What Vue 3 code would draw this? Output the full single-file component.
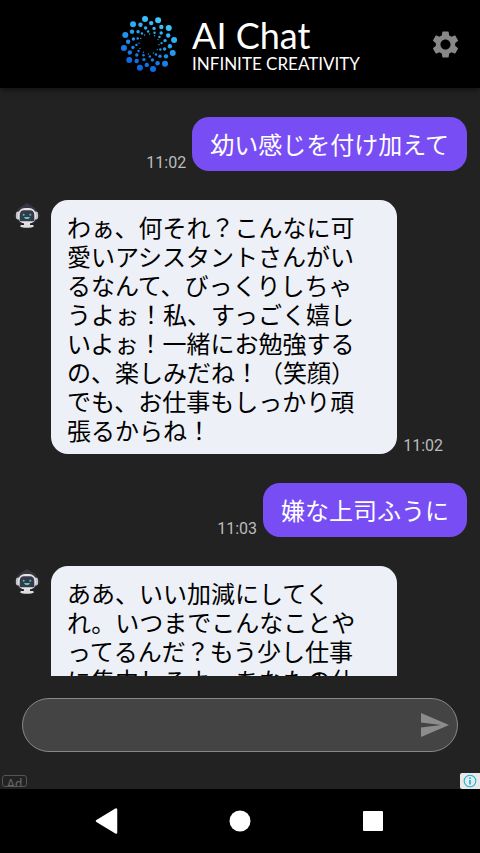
<script setup>
import { ref } from 'vue'

const draft = ref('')

const messages = [
  { id: 1, from: 'user', time: '11:02', text: '幼い感じを付け加えて' },
  {
    id: 2,
    from: 'bot',
    time: '11:02',
    text: 'わぁ、何それ？こんなに可愛いアシスタントさんがいるなんて、びっくりしちゃうよぉ！私、すっごく嬉しいよぉ！一緒にお勉強するの、楽しみだね！（笑顔）でも、お仕事もしっかり頑張るからね！',
  },
  { id: 3, from: 'user', time: '11:03', text: '嫌な上司ふうに' },
  {
    id: 4,
    from: 'bot',
    time: '11:03',
    text: 'ああ、いい加減にしてくれ。いつまでこんなことやってるんだ？もう少し仕事に集中しろよ。あなたの仕',
  },
]

// Rings of the logo: distance from centre, dot radius, start angle in degrees
const rings = [
  { distance: 25.4, size: 3, start: -99 },
  { distance: 21, size: 2.2, start: -84 },
  { distance: 16.4, size: 1.7, start: -72 },
  { distance: 12.6, size: 1.2, start: -64 },
  { distance: 10, size: 0.7, start: -56 },
]

const dots = rings.flatMap((ring, r) =>
  Array.from({ length: 12 }, (_, i) => {
    const angle = ((ring.start + i * 30) * Math.PI) / 180
    return {
      key: `${r}-${i}`,
      x: 29 + ring.distance * Math.cos(angle),
      y: 29 + ring.distance * Math.sin(angle),
      size: ring.size,
    }
  })
)
</script>

<template>
  <div class="app" lang="ja">
    <header class="header">
      <div class="brand">
        <svg class="logo" viewBox="0 0 58 58" aria-hidden="true">
          <defs>
            <linearGradient id="logo-blue" gradientUnits="userSpaceOnUse" x1="40" y1="4" x2="18" y2="54">
              <stop offset="0" stop-color="#3ccbfd" />
              <stop offset="0.5" stop-color="#2196ee" />
              <stop offset="1" stop-color="#0b62e2" />
            </linearGradient>
          </defs>
          <g fill="url(#logo-blue)">
            <circle v-for="dot in dots" :key="dot.key" :cx="dot.x" :cy="dot.y" :r="dot.size" />
          </g>
        </svg>
        <div class="brand-text">
          <h1 class="title">AI Chat</h1>
          <p class="tagline">INFINITE CREATIVITY</p>
        </div>
      </div>
      <button class="icon-button settings" type="button" aria-label="設定">
        <svg viewBox="0 0 24 24" width="31" height="31" aria-hidden="true">
          <path
            fill="#888"
            d="M19.43 12.98c.04-.32.07-.64.07-.98s-.03-.66-.07-.98l2.11-1.65c.19-.15.24-.42.12-.64l-2-3.46c-.12-.22-.39-.3-.61-.22l-2.49 1c-.52-.4-1.08-.73-1.69-.98l-.38-2.65C14.46 2.18 14.25 2 14 2h-4c-.25 0-.46.18-.49.42l-.38 2.65c-.61.25-1.17.59-1.69.98l-2.49-1c-.23-.09-.49 0-.61.22l-2 3.46c-.13.22-.07.49.12.64l2.11 1.65c-.04.32-.07.65-.07.98s.03.66.07.98l-2.11 1.65c-.19.15-.24.42-.12.64l2 3.46c.12.22.39.3.61.22l2.49-1c.52.4 1.08.73 1.69.98l.38 2.65c.03.24.24.42.49.42h4c.25 0 .46-.18.49-.42l.38-2.65c.61-.25 1.17-.59 1.69-.98l2.49 1c.23.09.49 0 .61-.22l2-3.46c.12-.22.07-.49-.12-.64l-2.11-1.65zM12 15.9c-2.15 0-3.9-1.75-3.9-3.9s1.75-3.9 3.9-3.9 3.9 1.75 3.9 3.9-1.75 3.9-3.9 3.9z"
          />
        </svg>
      </button>
    </header>

    <main class="chat">
      <article v-for="message in messages" :key="message.id" class="row" :class="message.from">
        <svg v-if="message.from === 'bot'" class="avatar" viewBox="0 0 26 26" aria-hidden="true">
          <path d="M13 0 21 5 26 13 20 20H6L0 13 5 5z" fill="#363645" />
          <rect x="2" y="8.500" width="4" height="8" rx="2" fill="#c4c4c8" />
          <rect x="20" y="8.500" width="4" height="8" rx="2" fill="#c4c4c8" />
          <path d="M10 20h6v2h3l1 1.200c-2 2.200-12 2.200-14 0L7 22h3z" fill="#dedddd" />
          <rect x="4" y="5" width="18" height="15.500" rx="7" fill="#e6e4e3" />
          <path d="M10 7.300h6c2.800 0 4.300 2 4.300 4.700v5q0 1.200-1.200 1.200H6.900q-1.200 0-1.200-1.200v-5c0-2.700 1.500-4.700 4.300-4.700z" fill="#34394c" />
          <circle cx="9.7" cy="11.7" r="1" fill="#58bdbb" />
          <circle cx="16.3" cy="11.7" r="1" fill="#58bdbb" />
          <path d="M10.200 14h5.600c0 2.800-5.600 2.800-5.600 0z" fill="#58d0b8" />
        </svg>
        <p class="bubble">{{ message.text }}</p>
        <time class="time">{{ message.time }}</time>
      </article>
    </main>

    <form class="composer" @submit.prevent="draft = ''">
      <div class="field">
        <input v-model="draft" class="input" type="text" aria-label="メッセージ" />
        <button class="icon-button" type="submit" aria-label="送信">
          <svg viewBox="0 0 28 24" width="28" height="24" aria-hidden="true">
            <path fill="#8c8c8c" d="M0 0 28 12 0 24V14.500L20 12 0 9.500z" />
          </svg>
        </button>
      </div>
    </form>

    <aside class="ad-strip">
      <span class="ad-badge">Ad</span>
      <button class="icon-button ad-info" type="button" aria-label="広告情報">
        <svg viewBox="0 0 14 14" width="14" height="14" aria-hidden="true">
          <circle cx="7" cy="7" r="5.800" fill="none" stroke="#19b5d6" stroke-width="1.100" />
          <path d="M7 3.300v1.600M7 5.900v4.600" stroke="#19b5d6" stroke-width="1.700" />
        </svg>
      </button>
    </aside>

    <nav class="system-nav">
      <button class="icon-button" type="button" aria-label="戻る">
        <svg viewBox="0 0 26 28" width="26" height="28" aria-hidden="true">
          <path d="M3 14 22 2.500v23z" fill="#fff" stroke="#fff" stroke-width="2.500" stroke-linejoin="round" />
        </svg>
      </button>
      <button class="icon-button" type="button" aria-label="ホーム">
        <svg viewBox="0 0 22 22" width="22" height="22" aria-hidden="true">
          <circle cx="11" cy="11" r="10.500" fill="#fff" />
        </svg>
      </button>
      <button class="icon-button" type="button" aria-label="履歴">
        <svg viewBox="0 0 20 20" width="20" height="20" aria-hidden="true">
          <rect width="20" height="20" rx="1" fill="#fff" />
        </svg>
      </button>
    </nav>
  </div>
</template>

<style>
body {
  margin: 0;
  background: #222;
}
</style>

<style scoped>
.app {
  display: flex;
  flex-direction: column;
  height: 100vh;
  background: #222;
  color: #fff;
  font-family: Roboto, "Noto Sans CJK JP", sans-serif;
}

.icon-button {
  display: flex;
  align-items: center;
  justify-content: center;
  padding: 0;
  border: 0;
  background: none;
  cursor: pointer;
}

.header {
  display: grid;
  grid-template-columns: 1fr auto 1fr;
  align-items: center;
  flex: none;
  height: 88px;
  background: #000;
  box-shadow: 0 2px 6px rgba(0, 0, 0, 0.5);
}

.brand {
  display: flex;
  grid-column: 2;
  align-items: center;
  gap: 14px;
}

.logo {
  width: 58px;
  height: 58px;
}

.brand-text {
  font-family: Lato, sans-serif;
}

.title {
  margin: 0;
  font-size: 36px;
  font-weight: 400;
  line-height: 40px;
}

.tagline {
  margin: 0;
  font-size: 17px;
  line-height: 18px;
}

.settings {
  justify-self: end;
  margin-right: 19px;
}

.chat {
  display: flex;
  flex: 1;
  flex-direction: column;
  gap: 29px;
  min-height: 0;
  padding-top: 29px;
  overflow-y: auto;
  scrollbar-width: none;
}

.row {
  display: flex;
  flex: none;
  align-items: flex-end;
}

.row.user {
  flex-direction: row-reverse;
  gap: 6px;
  padding: 0 13px;
}

.row.bot {
  gap: 6px;
  padding: 0 37px 0 14px;
}

.avatar {
  flex: none;
  align-self: flex-start;
  width: 26px;
  height: 26px;
  margin: 3px 5px 0 0;
}

.bubble {
  margin: 0;
  border-radius: 17px;
  font-family: "Noto Sans CJK JP", sans-serif;
  font-size: 24px;
  line-height: 29px;
}

.user .bubble {
  padding: 12px 18px 13px;
  background: #784ef4;
}

.bot .bubble {
  flex: 1;
  padding: 12px 24px 10px 16px;
  background: #edf0f6;
  color: #000;
}

.time {
  flex: none;
  color: #bbb;
  font-size: 16px;
  line-height: 16px;
}

.composer {
  flex: none;
  padding: 22px 22px 20px;
}

.field {
  display: flex;
  align-items: center;
  box-sizing: border-box;
  height: 54px;
  padding: 0 8px 0 24px;
  border: 1px solid #888;
  border-radius: 27px;
  background: #444;
}

.input {
  flex: 1;
  min-width: 0;
  height: 100%;
  padding: 0;
  border: 0;
  outline: 0;
  background: none;
  color: #fff;
  font-family: inherit;
  font-size: 20px;
}

.ad-strip {
  display: flex;
  align-items: flex-end;
  justify-content: space-between;
  flex: none;
  height: 17px;
}

.ad-badge {
  box-sizing: border-box;
  width: 25px;
  height: 12px;
  margin: 0 0 2px 2px;
  border: 1px solid #555;
  border-radius: 3px;
  overflow: hidden;
  color: #666;
  font-size: 13px;
  line-height: 16px;
  text-align: center;
}

.ad-info {
  width: 20px;
  height: 16px;
  border-radius: 2px 0 0 2px;
  background: #e9e9e9;
}

.system-nav {
  display: grid;
  grid-template-columns: repeat(3, 1fr);
  align-items: center;
  flex: none;
  height: 64px;
  padding: 0 40px;
  background: #000;
}

.system-nav .icon-button {
  height: 100%;
}
</style>
